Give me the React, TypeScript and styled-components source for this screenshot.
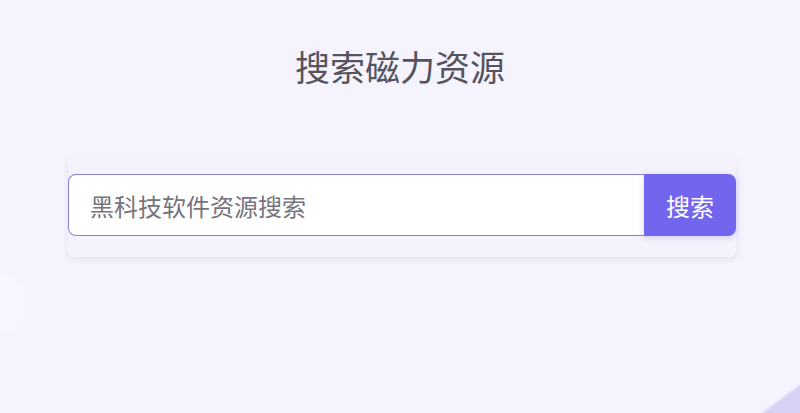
import React from "react";
import styled, { createGlobalStyle } from "styled-components";

const Global = createGlobalStyle`
  html, body { margin: 0; padding: 0; }
  body {
    background: #f5f3fd;
    font-family: "Noto Sans CJK SC", "Noto Sans", sans-serif;
    overflow: hidden;
  }
`;

const Page = styled.div`
  position: relative;
  width: 800px;
  height: 413px;
  overflow: hidden;
  background: #f5f3fd;
`;

const LeftBlob = styled.div`
  position: absolute;
  left: -38px;
  top: 270px;
  width: 66px;
  height: 66px;
  border-radius: 50%;
  background: rgba(255, 255, 255, 0.22);
  filter: blur(3px);
`;

const CornerShape = styled.div`
  position: absolute;
  left: 700px;
  top: 460px;
  width: 300px;
  height: 300px;
  background: #d7d2f4;
  transform: rotate(-37deg);
  transform-origin: 0 0;
  filter: blur(1px);
`;

const Content = styled.main`
  position: relative;
  display: flex;
  flex-direction: column;
  align-items: center;
  padding-top: 43px;
`;

const Title = styled.h1`
  margin: 0;
  font-size: 35px;
  line-height: 45px;
  font-weight: 400;
  color: #56535f;
  letter-spacing: 0;
`;

const Card = styled.section`
  margin-top: 67px;
  width: 668px;
  margin-left: 4px;
  padding: 19px 0 21px;
  background: #f4f2fc;
  border-radius: 6px;
  box-shadow: 0 3px 6px rgba(120, 110, 170, 0.12);
`;

const SearchRow = styled.form`
  display: flex;
  height: 62px;
`;

const Input = styled.input`
  flex: 1;
  min-width: 0;
  box-sizing: border-box;
  height: 62px;
  margin: 0;
  padding: 0 21px;
  border: 1px solid #8d80d8;
  border-right: none;
  border-radius: 8px 0 0 8px;
  background: #ffffff;
  font-family: "Noto Sans CJK SC", "Noto Sans", sans-serif;
  font-size: 24px;
  color: #333;
  outline: none;
  &::placeholder {
    color: #76737c;
  }
`;

const Button = styled.button`
  width: 92px;
  height: 62px;
  margin: 0;
  padding: 0;
  border: none;
  border-radius: 0 8px 8px 0;
  background: #7366ee;
  color: #ffffff;
  font-family: "Noto Sans CJK SC", "Noto Sans", sans-serif;
  font-size: 24px;
  cursor: pointer;
  box-shadow: 0 2px 6px rgba(115, 102, 238, 0.25);
`;

export default function App() {
  return (
    <>
      <Global />
      <Page>
        <LeftBlob />
        <CornerShape />
        <Content>
          <Title>搜索磁力资源</Title>
          <Card>
            <SearchRow onSubmit={(e) => e.preventDefault()}>
              <Input placeholder="黑科技软件资源搜索" />
              <Button type="submit">搜索</Button>
            </SearchRow>
          </Card>
        </Content>
      </Page>
    </>
  );
}
